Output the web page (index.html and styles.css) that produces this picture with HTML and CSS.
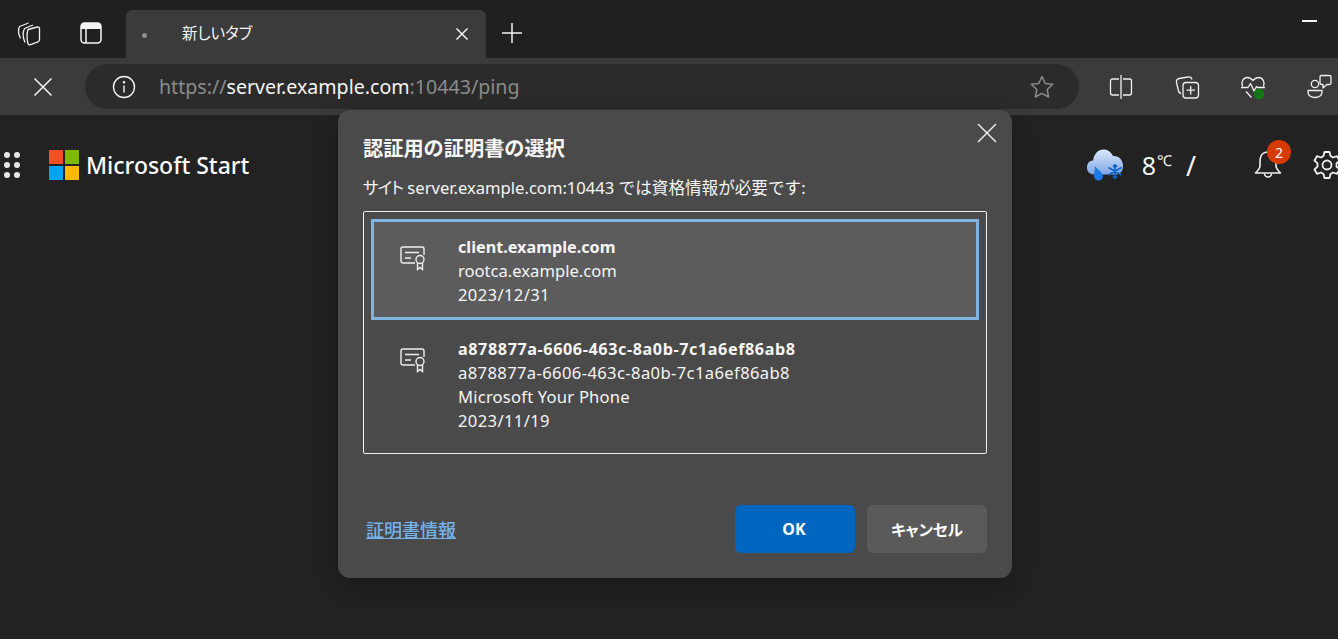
FILE: index.html
```html
<!DOCTYPE html>
<html lang="ja">
<head>
    <meta charset="UTF-8">
    <title>新しいタブ</title>
    <link rel="stylesheet" href="styles.css">
</head>
<body>
    <div class="tabstrip">
        <button class="strip-btn first">
            <svg width="26" height="26" viewBox="0 0 26 26" fill="none" stroke="#f0f0f0" stroke-width="1.300" stroke-linejoin="round">
                <path d="M5.500 18.500Q2 11.500 4.500 6.500L13.500 3"/>
                <path d="M10 22.500Q6.500 14.500 9.500 8.500L18 5"/>
                <path d="M13 9.500L22.500 7Q24.500 6.700 24.500 8.500V19.500Q24.500 21.300 23 21.800L15.500 24.700Q13.500 25.300 13 23.500Q11 16 13 9.500Z"/>
            </svg>
        </button>
        <button class="strip-btn second">
            <svg width="24" height="24" viewBox="0 0 24 24" fill="none" stroke="#f5f5f5" stroke-width="1.500">
                <rect x="2" y="2" width="20" height="20" rx="3.500"/>
                <path d="M5 2h14a3 3 0 0 1 3 3v3H2V5a3 3 0 0 1 3-3Z" fill="#f5f5f5" stroke="none"/>
                <path d="M7 8V22"/>
            </svg>
        </button>
        <div class="tab">
            <span class="tab-dot"></span>
            <span class="tab-title">新しいタブ</span>
            <svg class="tab-close" width="14" height="14" viewBox="0 0 14 14" stroke="#f2f2f2" stroke-width="1.500"><path d="M1.500 1.500l11 11M12.500 1.500l-11 11"/></svg>
        </div>
        <svg class="new-tab" width="22" height="22" viewBox="0 0 22 22" stroke="#f2f2f2" stroke-width="1.500"><path d="M11 1v20M1 11h20"/></svg>
        <div class="minimize"></div>
    </div>

    <div class="toolbar">
        <svg class="stop" width="20" height="20" viewBox="0 0 20 20" stroke="#f2f2f2" stroke-width="1.600"><path d="M1.500 1.500l17 17M18.500 1.500l-17 17"/></svg>
        <div class="address">
            <svg width="24" height="24" viewBox="0 0 24 24" fill="none" stroke="#f2f2f2" stroke-width="1.400">
                <circle cx="12" cy="12" r="10.500"/>
                <path d="M12 10.500v7"/>
                <circle cx="12" cy="7.300" r="0.600" fill="#f2f2f2"/>
            </svg>
            <div class="url"><span class="dim">https://</span>server.example.com<span class="dim">:10443/ping</span></div>
            <svg width="26" height="26" viewBox="0 0 26 26" fill="none" stroke="#8a8a8a" stroke-width="1.500" stroke-linejoin="round">
                <path d="M13 2.500l3.200 6.900 7.500.9-5.500 5.200 1.400 7.500L13 19.300l-6.600 3.700 1.400-7.500-5.500-5.200 7.500-.9Z"/>
            </svg>
        </div>
        <div class="tool-icons">
            <svg width="26" height="26" viewBox="0 0 26 26" fill="none" stroke="#f0f0f0" stroke-width="1.300">
                <path d="M11 5H4.500A2 2 0 0 0 2.500 7v12a2 2 0 0 0 2 2H11M15 5h6.500a2 2 0 0 1 2 2v12a2 2 0 0 1-2 2H15M13 1v24"/>
            </svg>
            <svg width="26" height="26" viewBox="0 0 26 26" fill="none" stroke="#f0f0f0" stroke-width="1.300">
                <path d="M18 5.500C17.500 3.500 16 2.500 14 3L5 4.500C3 5 2 6.500 2.500 8.500L4.500 17c.3 1.300 1.200 2.300 2.700 2.300"/>
                <rect x="9" y="8.500" width="15.500" height="15.500" rx="3"/>
                <path d="M16.700 12v8.500M12.500 16.200h8.500"/>
            </svg>
            <svg width="26" height="26" viewBox="0 0 26 26" fill="none" stroke="#f0f0f0" stroke-width="1.300" stroke-linejoin="round">
                <path d="M2.500 12.500C.5 8 3.500 3.500 7.500 3.500c2.300 0 4 1.300 5.500 3 1.500-1.700 3.200-3 5.500-3 4 0 7 4.500 5 9"/>
                <path d="M1 13.500H8l2.500-4 3.500 7.500 2.500-4.500 1 1H25M6 17.500l5.500 6"/>
                <circle cx="19" cy="20" r="5.200" fill="#107c10" stroke="none"/>
                <path d="M16.800 20l1.600 1.600 2.800-3" stroke="#3b3b3b" stroke-width="1"/>
            </svg>
            <svg width="26" height="26" viewBox="0 0 26 26" fill="none" stroke="#f0f0f0" stroke-width="1.300" stroke-linejoin="round">
                <circle cx="9" cy="10" r="3.700"/>
                <path d="M2 16.500h14v1.800c0 3-3 5.200-7 5.200s-7-2.200-7-5.200Z"/>
                <path d="M15.500 1.500h8c1 0 1.500.5 1.500 1.500v6c0 1-.5 1.500-1.500 1.500h-2.500L17 14v-3.500h-1.500c-1 0-1.500-.5-1.500-1.500V3c0-1 .5-1.500 1.500-1.500Z"/>
            </svg>
        </div>
    </div>

    <div class="start-bar">
        <div class="brand">
            <div class="waffle">
                <i></i><i></i><i></i><i></i><i></i><i></i>
            </div>
            <div class="ms-logo"><i class="red"></i><i class="green"></i><i class="blue"></i><i class="yellow"></i></div>
            <span class="brand-name">Microsoft Start</span>
        </div>
        <div class="status">
            <svg class="weather" width="36" height="32" viewBox="0 0 36 32">
                <defs>
                    <linearGradient id="cloud" x1="0" y1="0" x2="0" y2="1">
                        <stop offset="0" stop-color="#dbe8fc"/>
                        <stop offset="1" stop-color="#7ea6e4"/>
                    </linearGradient>
                </defs>
                <path d="M7 25.500C2.500 25.500 0 22.500 0 18.500S2.500 11.500 6 11.500C7 5 11 0.500 16.500 0.500c4.500 0 7.500 2.500 9.500 6.500C31.500 6.500 36 10.500 36 17s-4 8.500-8 8.500Z" fill="url(#cloud)"/>
                <path d="M8 17c3 4 8 7 8 10a4.500 4.500 0 0 1-9 0c0-2.500 1-6 1-10Z" fill="#1a7ae8"/>
                <path d="M28 15v15M21.500 18.500l13 7.500M34.500 18.500l-13 7.500M26 16.500l2 2 2-2M26 28.500l2-2 2 2" fill="none" stroke="#0f62c8" stroke-width="1.700"/>
            </svg>
            <span class="temp">8</span><span class="unit">℃</span>
            <span class="slash">/</span>
            <div class="bell-wrap">
                <svg width="30" height="32" viewBox="0 0 30 32" fill="none" stroke="#f0f0f0" stroke-width="1.600" stroke-linejoin="round">
                    <path d="M15 3C9.500 3 7 7 7 12v5c0 2-2 4.500-4.500 7h25C25 21.500 23 19 23 17v-5c0-5-2.500-9-8-9Z"/>
                    <path d="M11.500 24.500a3.500 3.500 0 0 0 7 0"/>
                </svg>
                <span class="badge">2</span>
            </div>
            <svg class="gear" width="28" height="30" viewBox="0 0 28 30" fill="none" stroke="#f0f0f0" stroke-width="1.800" stroke-linejoin="round">
                <circle cx="14" cy="15" r="4.500"/>
                <path d="M11.500 2h5l1 4 2.500 1.500 4-1.300 2.500 4.300-3 2.800v3.400l3 2.800-2.500 4.300-4-1.300L17.500 24l-1 4h-5l-1-4L8 22.500l-4 1.300-2.500-4.300 3-2.800v-3.400l-3-2.800L4 6.200l4 1.300L10.500 6Z"/>
            </svg>
        </div>
    </div>

    <div class="dialog">
        <svg class="dialog-close" width="20" height="20" viewBox="0 0 20 20" stroke="#f2f2f2" stroke-width="1.400"><path d="M1 1l18 18M19 1L1 19"/></svg>
        <h2 class="dialog-title">認証用の証明書の選択</h2>
        <p class="dialog-sub"><span class="kana tight">サイト</span> server.example.com:10443 では資格情報が必要です:</p>
        <div class="cert-list">
            <div class="cert selected">
                <svg class="cert-icon" width="26" height="26" viewBox="0 0 26 26" fill="none" stroke="#f0f0f0" stroke-width="1.400">
                    <path d="M15 18H3a2 2 0 0 1-2-2V4a2 2 0 0 1 2-2h19a2 2 0 0 1 2 2v6"/>
                    <path d="M5 7.500h14M5 13h6"/>
                    <circle cx="20" cy="14.500" r="4"/>
                    <path d="M17.500 18v6.500l2.500-2 2.500 2V18"/>
                </svg>
                <div class="cert-text">
                    <div class="cert-name">client.example.com</div>
                    <div>rootca.example.com</div>
                    <div class="num">2023/12/31</div>
                </div>
            </div>
            <div class="cert">
                <svg class="cert-icon" width="26" height="26" viewBox="0 0 26 26" fill="none" stroke="#f0f0f0" stroke-width="1.400">
                    <path d="M15 18H3a2 2 0 0 1-2-2V4a2 2 0 0 1 2-2h19a2 2 0 0 1 2 2v6"/>
                    <path d="M5 7.500h14M5 13h6"/>
                    <circle cx="20" cy="14.500" r="4"/>
                    <path d="M17.500 18v6.500l2.500-2 2.500 2V18"/>
                </svg>
                <div class="cert-text">
                    <div class="cert-name num-bold">a878877a-6606-463c-8a0b-7c1a6ef86ab8</div>
                    <div class="num">a878877a-6606-463c-8a0b-7c1a6ef86ab8</div>
                    <div class="phone">Microsoft Your Phone</div>
                    <div class="num">2023/11/19</div>
                </div>
            </div>
        </div>
        <div class="dialog-foot">
            <a class="cert-link" href="#">証明書情報</a>
            <div class="dialog-btns">
                <button class="btn primary">OK</button>
                <button class="btn kana cancel">キャンセル</button>
            </div>
        </div>
    </div>
</body>
</html>
```

FILE: styles.css
```css
* {
    box-sizing: border-box;
}
html, body {
    height: 100%;
}
body {
    margin: 0;
    overflow: hidden;
    position: relative;
    background-color: #222222;
    color: #f5f5f5;
    font-family: "Noto Sans", "Noto Sans CJK JP", sans-serif;
}
svg {
    display: block;
    flex: none;
}
.kana {
    font-feature-settings: "palt";
}
.tight {
    letter-spacing: -1px;
}

.tabstrip {
    height: 58px;
    background-color: #202020;
    display: flex;
    align-items: flex-end;
    position: relative;
}
.strip-btn {
    height: 48px;
    padding: 0 0 2px;
    background: none;
    border: none;
    display: flex;
    align-items: center;
    justify-content: center;
}
.strip-btn.first {
    width: 56px;
}
.strip-btn.second {
    width: 70px;
}
.tab {
    width: 360px;
    height: 48px;
    background-color: #3b3b3b;
    border-radius: 6px 6px 0 0;
    display: flex;
    align-items: center;
    font-size: 15.500px;
    font-feature-settings: "palt";
    padding: 0 17px 0 16px;
}
.tab-dot {
    width: 5px;
    height: 5px;
    border-radius: 50%;
    background-color: #8e8e8e;
    margin-top: 2px;
}
.tab-title {
    margin-left: 35px;
    flex: 1;
    margin-top: -4px;
}
.new-tab {
    margin: 0 0 14px 15px;
}
.minimize {
    position: absolute;
    top: 20px;
    right: 21px;
    width: 15px;
    height: 2px;
    background-color: #f5f5f5;
}

.toolbar {
    height: 57px;
    background-color: #3b3b3b;
    display: flex;
    align-items: center;
    padding: 0 0 0 33px;
}
.address {
    width: 994px;
    height: 45px;
    margin-left: 32px;
    background-color: #2b2b2b;
    border-radius: 23px;
    display: flex;
    align-items: center;
    padding: 0 24px 0 27px;
}
.url {
    flex: 1;
    font-size: 19.600px;
    margin-left: 23px;
    color: #f5f5f5;
    white-space: nowrap;
}
.dim {
    color: #8c8c8c;
}
.tool-icons {
    display: flex;
    align-items: center;
    gap: 40px;
    margin-left: 29px;
}

.start-bar {
    height: 100px;
    display: flex;
    justify-content: space-between;
    padding-top: 35px;
    align-items: flex-start;
}
.brand {
    display: flex;
    align-items: center;
    height: 30px;
    padding-left: 4px;
}
.waffle {
    display: grid;
    grid-template-columns: 6px 6px;
    gap: 4px;
}
.waffle i {
    width: 6px;
    height: 6px;
    border-radius: 50%;
    background-color: #e8e8e8;
}
.ms-logo {
    display: grid;
    grid-template-columns: 14px 14px;
    grid-auto-rows: 14px;
    gap: 2px;
    margin-left: 29px;
}
.red { background-color: #f25022; }
.green { background-color: #7fba00; }
.blue { background-color: #00a4ef; }
.yellow { background-color: #ffb900; }
.brand-name {
    font-size: 23px;
    font-weight: 500;
    margin-left: 7px;
    color: #ffffff;
}
.status {
    display: flex;
    align-items: center;
    height: 30px;
    margin-right: -3px;
}
.temp {
    font-size: 25px;
    margin-left: 19px;
}
.unit {
    font-size: 15px;
    margin-top: -10px;
    margin-left: 1px;
}
.slash {
    font-size: 27px;
    margin-left: 14px;
}
.bell-wrap {
    position: relative;
    margin-left: 57px;
}
.badge {
    position: absolute;
    top: -9px;
    right: -8px;
    width: 24px;
    height: 24px;
    border-radius: 50%;
    background-color: #d83b01;
    color: #ffffff;
    font-size: 14px;
    display: flex;
    align-items: center;
    justify-content: center;
}
.gear {
    margin-left: 30px;
}

.dialog {
    position: absolute;
    left: 338px;
    top: 110px;
    width: 674px;
    height: 468px;
    background-color: #4a4a4a;
    border-radius: 12px;
    box-shadow: 0 6px 24px rgba(0, 0, 0, 0.3);
    padding: 23px 25px 25px;
    display: flex;
    flex-direction: column;
}
.dialog-close {
    position: absolute;
    top: 13px;
    right: 15px;
}
.dialog-title {
    margin: 0;
    font-size: 20.200px;
    line-height: 30px;
    font-weight: 700;
}
.dialog-sub {
    margin: 14px 0 0;
    font-size: 16.600px;
    line-height: 22px;
}
.cert-list {
    margin-top: 12px;
    height: 243px;
    border: 1px solid #f0f0f0;
    border-radius: 2px;
    padding: 7px;
}
.cert {
    display: flex;
    align-items: flex-start;
    padding: 17px 0 0 29px;
    font-size: 16.600px;
    line-height: 24px;
}
.cert.selected {
    height: 101px;
    background-color: #5c5c5c;
    border: 3px solid #7fb4e0;
    padding: 13px 0 0 26px;
}
.cert-icon {
    margin-top: 10px;
}
.cert-text {
    margin-left: 32px;
}
.cert-name {
    font-size: 16.200px;
    font-weight: 700;
}
.num {
    letter-spacing: 0.370px;
}
.phone {
    letter-spacing: 0.200px;
}
.cert-name.num-bold {
    letter-spacing: 0.580px;
}
.dialog-foot {
    margin-top: auto;
    display: flex;
    align-items: center;
    justify-content: space-between;
}
.cert-link {
    margin-left: 3px;
    font-size: 18px;
    font-weight: 500;
    color: #74b3ee;
}
.dialog-btns {
    display: flex;
    gap: 12px;
}
.btn {
    width: 120px;
    height: 48px;
    border: none;
    border-radius: 6px;
    background-color: #5a5a5a;
    color: #ffffff;
    font-family: inherit;
    font-size: 16px;
    font-weight: 700;
}
.btn.cancel {
    font-size: 15.600px;
}
.btn.primary {
    background-color: #0067c0;
    padding-right: 8px;
}
```
